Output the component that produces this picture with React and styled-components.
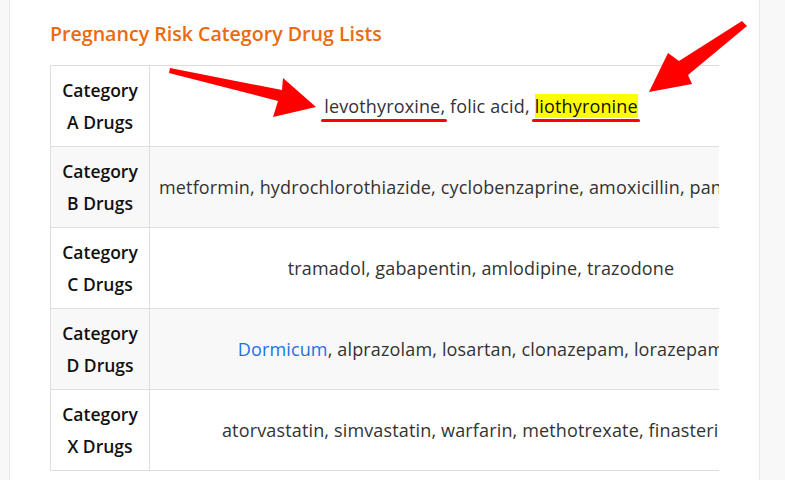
import React from 'react'
import styled, { createGlobalStyle } from 'styled-components'

const GlobalStyle = createGlobalStyle`
  html, body {
    margin: 0;
    padding: 0;
    background: #f8f8f8;
  }
  body {
    font-family: "Open Sans", "Liberation Sans", sans-serif;
    overflow: hidden;
  }
`

const rows = [
  {
    label: 'A',
    drugs: [
      { name: 'levothyroxine', mark: true, comma: true },
      { name: 'folic acid' },
      { name: 'liothyronine', mark: true, highlight: true }
    ]
  },
  {
    label: 'B',
    drugs: [
      { name: 'metformin' },
      { name: 'hydrochlorothiazide' },
      { name: 'cyclobenzaprine' },
      { name: 'amoxicillin' },
      { name: 'pantoprazole' }
    ]
  },
  {
    label: 'C',
    drugs: [
      { name: 'tramadol' },
      { name: 'gabapentin' },
      { name: 'amlodipine' },
      { name: 'trazodone' }
    ]
  },
  {
    label: 'D',
    drugs: [
      { name: 'Dormicum', link: true },
      { name: 'alprazolam' },
      { name: 'losartan' },
      { name: 'clonazepam' },
      { name: 'lorazepam' }
    ]
  },
  {
    label: 'X',
    drugs: [
      { name: 'atorvastatin' },
      { name: 'simvastatin' },
      { name: 'warfarin' },
      { name: 'methotrexate' },
      { name: 'finasteride' }
    ]
  }
]

export default function App () {
  return (
    <Page>
      <GlobalStyle />
      <Card>
        <Title>Pregnancy Risk Category Drug Lists</Title>
        <TableWrap>
          <Table>
            <tbody>
              {rows.map((row, i) => (
                <Row key={row.label} $striped={i % 2 === 1}>
                  <HeadCell>
                    Category
                    <br />
                    {row.label} Drugs
                  </HeadCell>
                  <DrugCell>
                    {row.drugs.map((drug, j) => {
                      const last = j === row.drugs.length - 1
                      let text = drug.name
                      if (drug.link) text = <Link>{drug.name}</Link>
                      if (drug.highlight) text = <Highlight>{drug.name}</Highlight>
                      if (drug.mark) {
                        return (
                          <React.Fragment key={drug.name}>
                            <Marked>{text}{drug.comma ? ',' : ''}</Marked>
                            {!last && !drug.comma ? ', ' : ' '}
                          </React.Fragment>
                        )
                      }
                      return (
                        <React.Fragment key={drug.name}>
                          {text}{last ? '' : ', '}
                        </React.Fragment>
                      )
                    })}
                  </DrugCell>
                </Row>
              ))}
            </tbody>
          </Table>
        </TableWrap>
      </Card>
      <Annotations viewBox='0 0 785 480'>
        <polygon points='170,68 282,90 283,78 316,107 273,117 278,101 169,73' fill='#ff0000' />
        <polygon points='742,21 747,26 688,75 692,84 649,92 668,53 679,61' fill='#ff0000' />
      </Annotations>
    </Page>
  )
}

const Page = styled.div`
  position: relative;
  width: 785px;
  height: 480px;
  overflow: hidden;
`

const Card = styled.div`
  margin-left: 9px;
  width: 669px;
  height: 480px;
  padding: 22px 40px 0;
  background: #fff;
  border-left: 1px solid #e8e8e8;
  border-right: 1px solid #e8e8e8;
`

const Title = styled.h2`
  margin: 0 0 19px;
  font-size: 19.6px;
  font-weight: 600;
  line-height: 24px;
  color: #eb6a0e;
`

const TableWrap = styled.div`
  width: 669px;
  overflow: hidden;
`

const Table = styled.table`
  border-collapse: collapse;
  border: 1px solid #dedede;
  font-size: 18px;
  letter-spacing: 0.15px;
  line-height: 32px;
  color: #333;
`

const Row = styled.tr`
  background: ${p => (p.$striped ? '#f8f8f8' : '#fff')};
`

const HeadCell = styled.td`
  box-sizing: border-box;
  width: 99px;
  min-width: 99px;
  padding: 8px 0;
  border: 1px solid #dedede;
  text-align: center;
  font-size: 17.5px;
  letter-spacing: 0;
  font-weight: 600;
  color: #111;
`

const DrugCell = styled.td`
  padding: 8px 9px;
  border: 1px solid #dedede;
  text-align: center;
  white-space: nowrap;
`

const Link = styled.span`
  color: #1a73e8;
`

const Highlight = styled.span`
  background: #ffff00;
  color: #111;
`

const Marked = styled.span`
  position: relative;
  &::after {
    content: '';
    position: absolute;
    left: -3px;
    right: -2px;
    bottom: -4px;
    height: 3px;
    border-radius: 2px;
    background: #ff0000;
  }
`

const Annotations = styled.svg`
  position: absolute;
  top: 0;
  left: 0;
  width: 785px;
  height: 480px;
  pointer-events: none;
`
